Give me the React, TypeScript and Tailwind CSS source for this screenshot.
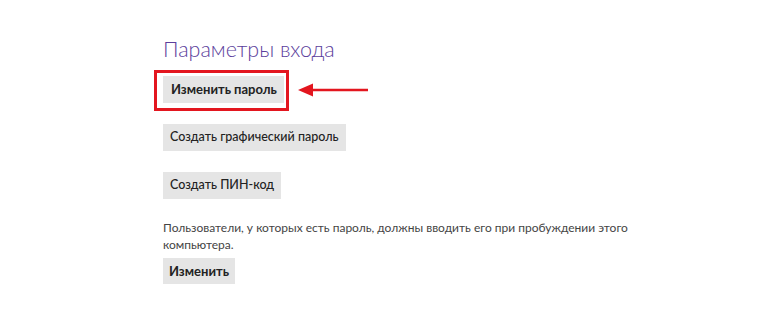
export default function App() {
    return (
        <div className="min-h-[330px] w-[770px] bg-white pl-[163px] pt-[34px] font-['Lato',sans-serif]">
            <h1 className="text-[21.5px] font-light leading-[30px] text-[#5b3e9c]">
                Параметры входа
            </h1>

            <div className="relative mt-[12px] w-fit">
                <button className="h-[27px] bg-[#e5e5e5] pl-[8px] pr-[7px] text-[13px] font-bold text-[#222]">
                    Изменить пароль
                </button>
                <div className="pointer-events-none absolute -left-[9px] -top-[6px] h-[41px] w-[135px] border-[3px] border-[#e3161f]" />
                <svg
                    className="pointer-events-none absolute left-[135px] top-[6px]"
                    width="72"
                    height="16"
                    viewBox="0 0 72 16"
                >
                    <path d="M 14 8 L 70 8" stroke="#e3161f" strokeWidth="2.5" />
                    <path d="M 0 8 L 15 1.5 L 15 14.5 Z" fill="#e3161f" />
                </svg>
            </div>

            <button className="mt-[21px] block h-[27px] bg-[#e5e5e5] px-[7px] text-[12.5px] font-medium text-[#222]">
                Создать графический пароль
            </button>

            <button className="mt-[21px] block h-[27px] bg-[#e5e5e5] px-[7px] text-[12.5px] font-medium text-[#222]">
                Создать ПИН-код
            </button>

            <p className="mt-[20px] w-[480px] text-[12px] leading-[17px] text-[#444]">
                Пользователи, у которых есть пароль, должны вводить его при пробуждении этого компьютера.
            </p>

            <button className="mt-[5px] block h-[26px] bg-[#e5e5e5] px-[6px] text-[13px] font-bold text-[#222]">
                Изменить
            </button>
        </div>
    );
}
